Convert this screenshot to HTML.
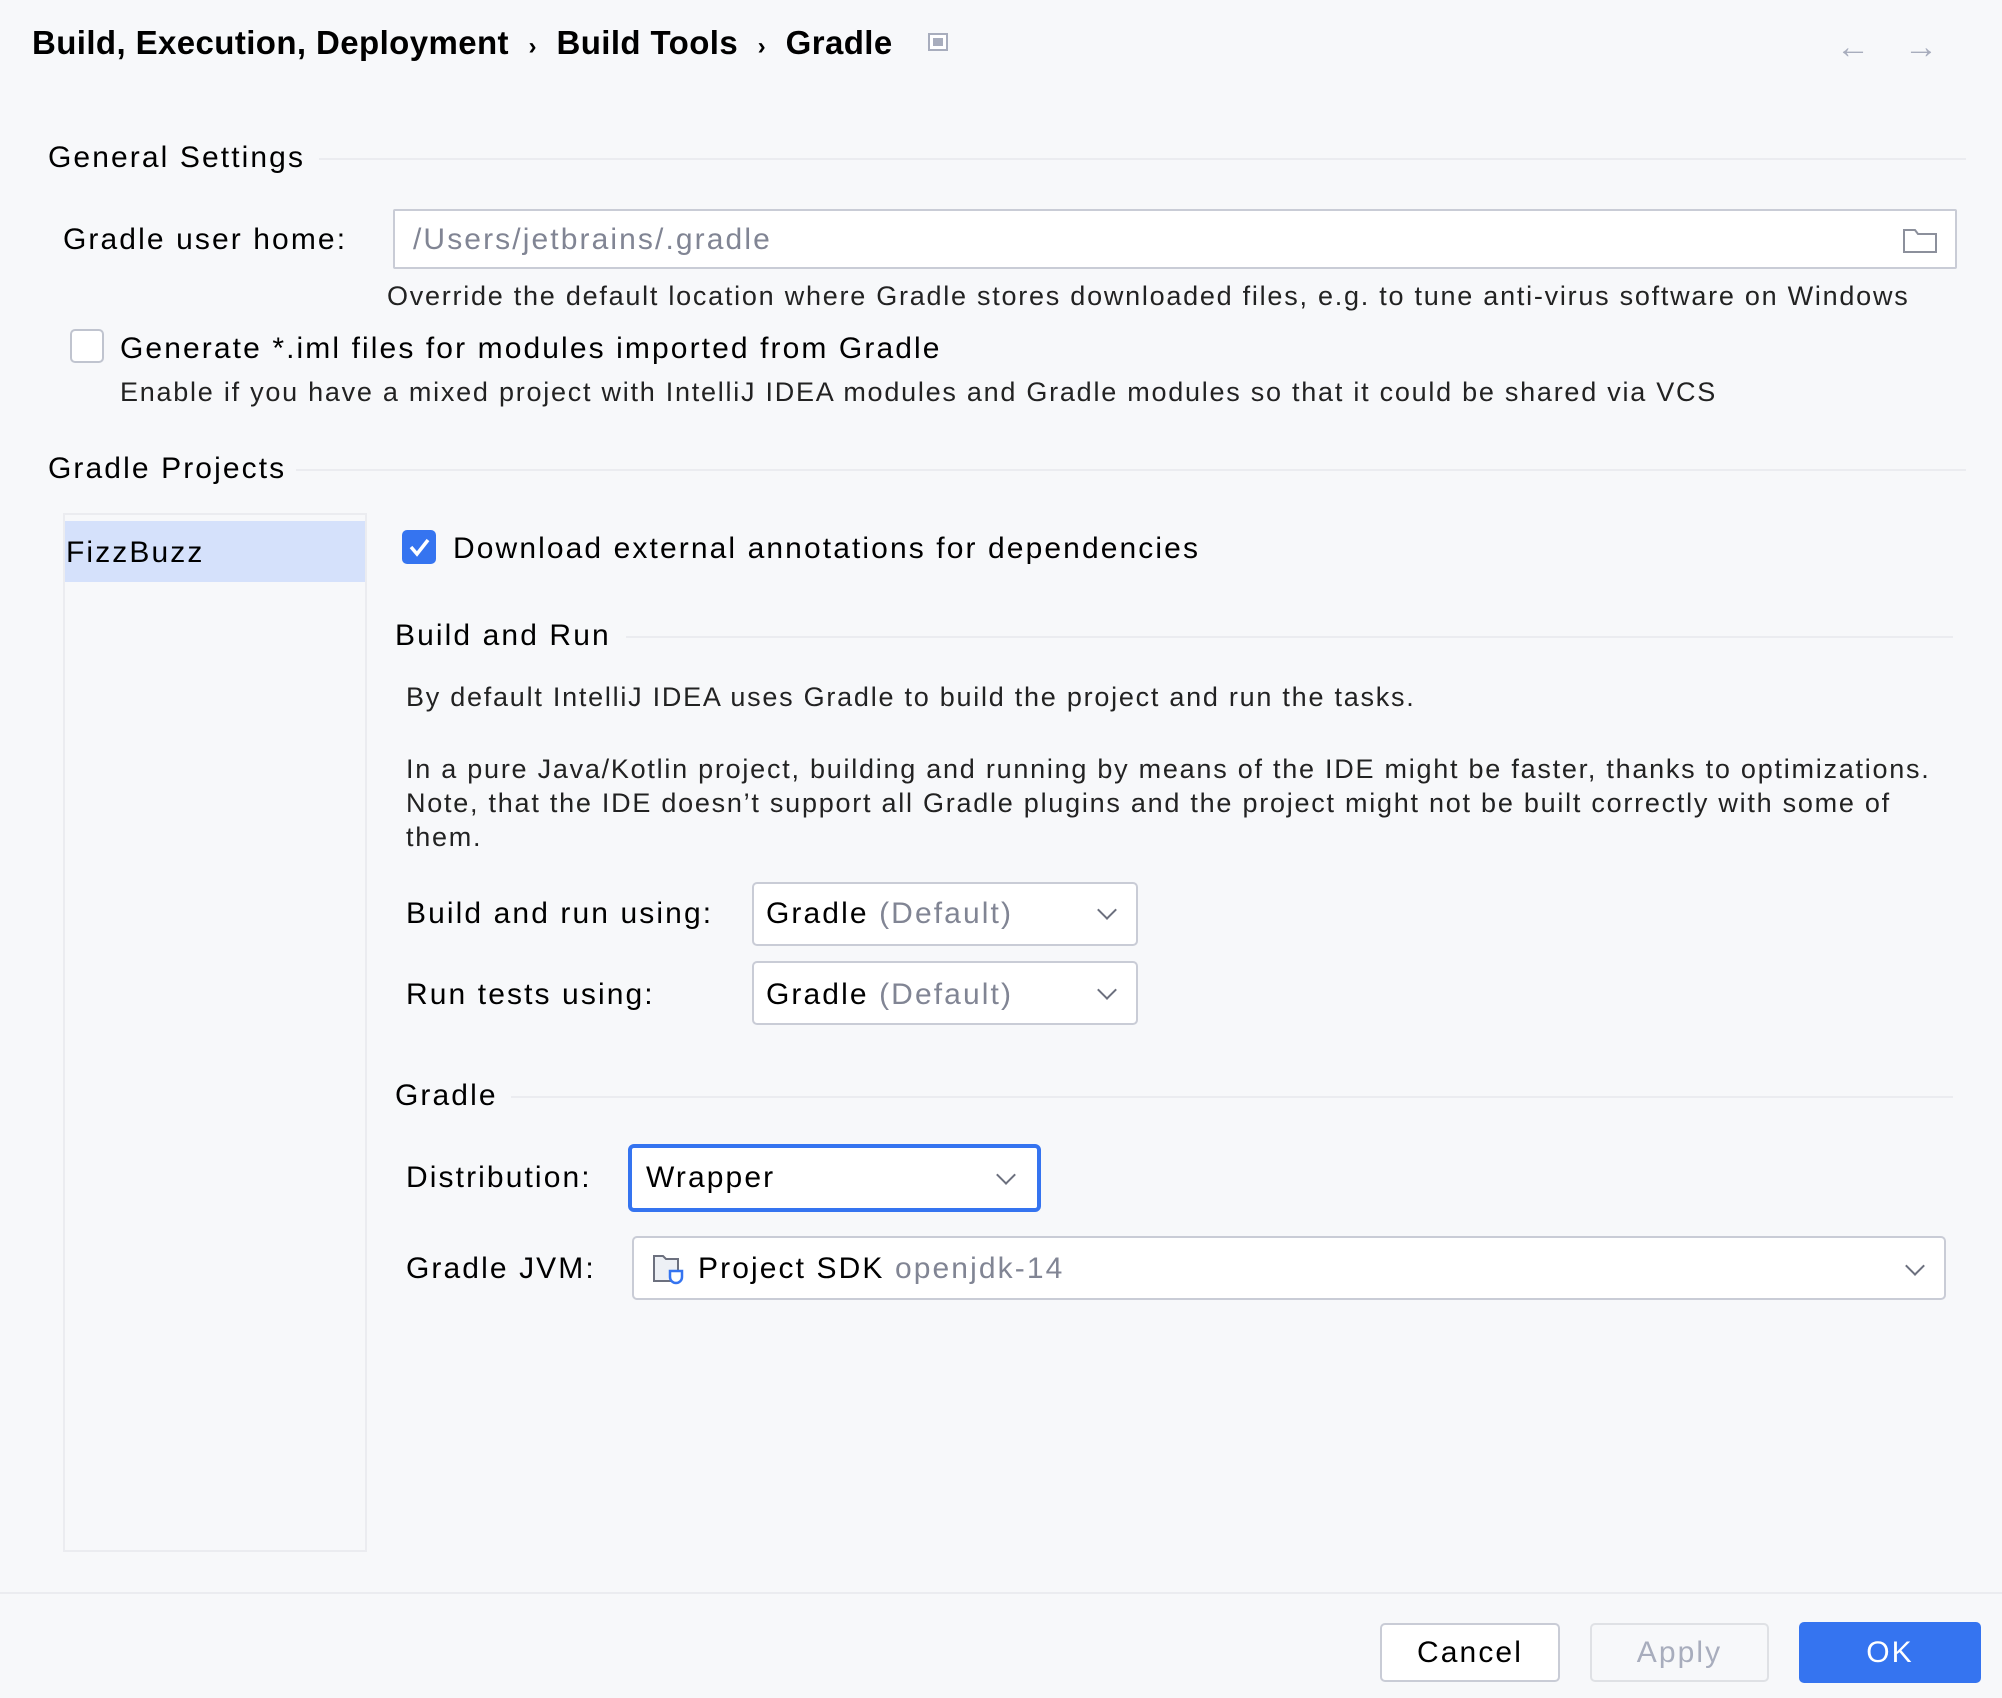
<!DOCTYPE html>
<html><head><meta charset="utf-8"><style>
*{margin:0;padding:0;box-sizing:border-box}
body{width:2002px;height:1698px;background:#f7f8fa;font-family:"Liberation Sans",sans-serif;color:#000;position:relative;overflow:hidden}
.a{position:absolute;white-space:nowrap;line-height:1}
.t{font-size:30px;letter-spacing:2.1px}
.s{font-size:27px;color:#222;letter-spacing:1.75px}
.line{position:absolute;height:2px;background:#ebecf0}
.box{position:absolute;background:#fff;border:2px solid #c9ccd6;border-radius:5px}
.g{color:#818594}
.chev{position:absolute;width:14px;height:14px;border-right:2px solid #6c707e;border-bottom:2px solid #6c707e;transform:rotate(45deg)}
</style></head><body>
<div class="a" style="left:32px;top:26px;font-size:33px;font-weight:bold;letter-spacing:0.4px">Build, Execution, Deployment <span style="font-size:24px;margin:0 10px">›</span> Build Tools <span style="font-size:24px;margin:0 10px">›</span> Gradle</div>
<div class="a" style="left:928px;top:33px;width:20px;height:18px;border:2px solid #a8adbd;background:#fff"><div style="margin:3px;height:8px;background:#a8adbd"></div></div>
<div class="a" style="left:1836px;top:30px;font-size:34px;color:#a8adbd">←</div>
<div class="a" style="left:1904px;top:30px;font-size:34px;color:#a8adbd">→</div>

<div class="a t" style="left:48px;top:143px">General Settings</div>
<div class="line" style="left:319px;right:36px;top:158px"></div>
<div class="a t" style="left:63px;top:225px">Gradle user home:</div>
<div class="box" style="left:393px;top:209px;width:1564px;height:60px;border-radius:2px"></div>
<div class="a t g" style="left:413px;top:225px">/Users/jetbrains/.gradle</div>
<svg class="a" style="left:1902px;top:226px" width="36" height="28" viewBox="0 0 36 28"><path d="M2 4h11l3 4h18v18H2z" fill="none" stroke="#8c909c" stroke-width="2"/></svg>
<div class="a s" style="left:387px;top:283px">Override the default location where Gradle stores downloaded files, e.g. to tune anti-virus software on Windows</div>
<div class="a" style="left:70px;top:329px;width:34px;height:34px;border:2px solid #c0c4cf;border-radius:5px;background:#fff"></div>
<div class="a t" style="left:120px;top:334px">Generate *.iml files for modules imported from Gradle</div>
<div class="a s" style="left:120px;top:379px">Enable if you have a mixed project with IntelliJ IDEA modules and Gradle modules so that it could be shared via VCS</div>

<div class="a t" style="left:48px;top:454px">Gradle Projects</div>
<div class="line" style="left:296px;right:36px;top:469px"></div>
<div class="a" style="left:63px;top:513px;width:304px;height:1039px;border:2px solid #ebecf0;background:#f7f8fa"></div>
<div class="a" style="left:65px;top:521px;width:300px;height:61px;background:#d5e1fb"></div>
<div class="a t" style="left:66px;top:538px">FizzBuzz</div>

<div class="a" style="left:402px;top:530px;width:34px;height:34px;background:#3574f0;border-radius:5px"><svg width="34" height="34"><path d="M9 17l6 7 11-14" fill="none" stroke="#fff" stroke-width="3.5"/></svg></div>
<div class="a t" style="left:453px;top:534px">Download external annotations for dependencies</div>
<div class="a t" style="left:395px;top:621px">Build and Run</div>
<div class="line" style="left:626px;right:49px;top:636px"></div>
<div class="a s" style="left:406px;top:684px">By default IntelliJ IDEA uses Gradle to build the project and run the tasks.</div>
<div class="a s" style="left:406px;top:752px;line-height:34px">In a pure Java/Kotlin project, building and running by means of the IDE might be faster, thanks to optimizations.<br>Note, that the IDE doesn’t support all Gradle plugins and the project might not be built correctly with some of<br>them.</div>

<div class="a t" style="left:406px;top:899px">Build and run using:</div>
<div class="box" style="left:752px;top:882px;width:386px;height:64px"></div>
<div class="a t" style="left:766px;top:899px">Gradle <span class="g">(Default)</span></div>
<div class="chev" style="left:1100px;top:903px"></div>
<div class="a t" style="left:406px;top:980px">Run tests using:</div>
<div class="box" style="left:752px;top:961px;width:386px;height:64px"></div>
<div class="a t" style="left:766px;top:980px">Gradle <span class="g">(Default)</span></div>
<div class="chev" style="left:1100px;top:983px"></div>

<div class="a t" style="left:395px;top:1081px">Gradle</div>
<div class="line" style="left:511px;right:49px;top:1096px"></div>
<div class="a t" style="left:406px;top:1163px">Distribution:</div>
<div class="box" style="left:628px;top:1144px;width:413px;height:68px;border:4px solid #3574f0;border-radius:6px"></div>
<div class="a t" style="left:646px;top:1163px">Wrapper</div>
<div class="chev" style="left:999px;top:1168px"></div>
<div class="a t" style="left:406px;top:1254px">Gradle JVM:</div>
<div class="box" style="left:632px;top:1236px;width:1314px;height:64px"></div>
<svg class="a" style="left:652px;top:1253px" width="36" height="34" viewBox="0 0 36 34"><path d="M2 3h9l3 3h12v22H2z" fill="#edf0f5" stroke="#6c707e" stroke-width="2"/><path d="M18 18h12v6a6 6 0 0 1-12 0z" fill="#fff" stroke="#3574f0" stroke-width="2.5"/></svg>
<div class="a t" style="left:698px;top:1254px">Project SDK <span class="g">openjdk-14</span></div>
<div class="chev" style="left:1908px;top:1259px"></div>

<div class="line" style="left:0;right:0;top:1592px"></div>
<div class="box" style="left:1380px;top:1623px;width:180px;height:59px;border-radius:5px"></div>
<div class="a t" style="left:1380px;top:1638px;width:180px;text-align:center">Cancel</div>
<div class="box" style="left:1590px;top:1623px;width:179px;height:59px;background:#f7f8fa;border-color:#dfe1e5"></div>
<div class="a t" style="left:1590px;top:1638px;width:179px;text-align:center;color:#a8adbd">Apply</div>
<div class="a" style="left:1799px;top:1622px;width:182px;height:61px;background:#3574f0;border-radius:5px"></div>
<div class="a t" style="left:1799px;top:1638px;width:182px;text-align:center;color:#fff">OK</div>
</body></html>
